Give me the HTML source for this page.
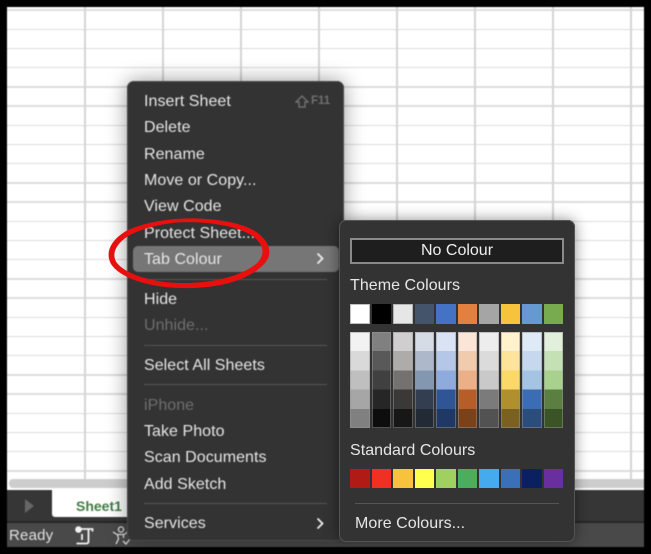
<!DOCTYPE html>
<html>
<head>
<meta charset="utf-8">
<style>
html,body{margin:0;padding:0;background:#000;}
#page{position:relative;width:651px;height:554px;overflow:hidden;background:#000;font-family:"Liberation Sans",sans-serif;}
#inner{position:absolute;left:7px;top:7px;width:637px;height:540px;overflow:hidden;background:#fff;filter:blur(.4px);}
.a{position:absolute;}
.h{position:absolute;left:0;width:637px;height:1.5px;background:#dcdcdc;}
.v{position:absolute;top:0;height:476px;width:1.5px;background:#d4d4d4;}
#menu{position:absolute;left:127px;top:81px;width:217px;height:460px;background:#333;border-radius:7px;box-shadow:0 0 20px rgba(0,0,0,.4),inset 0 0 0 1px #4a4a4a;filter:blur(.4px);}
#sub{position:absolute;left:339px;top:220px;width:236px;height:322px;background:#333;border-radius:7px;box-shadow:0 0 14px rgba(0,0,0,.45),inset 0 0 0 1px #555;filter:blur(.35px);}
.t{position:absolute;font-size:16px;line-height:20px;color:#e6e6e6;white-space:nowrap;letter-spacing:.05px;}
.d{color:#6e6e6e;}
.sep{position:absolute;height:1px;background:#555;}
.sw{position:absolute;width:19.5px;}
.o{box-shadow:inset 0 0 0 1px rgba(140,140,140,.55);}
.c{position:absolute;top:112px;width:19.5px;height:96px;}
.c::after{content:"";position:absolute;inset:0;box-shadow:inset 0 0 0 1px rgba(150,150,150,.5);}
</style>
</head>
<body>
<div id="page">
<div id="inner">
<div class="h" style="top:2px"></div><div class="h" style="top:21.5px"></div><div class="h" style="top:40.7px"></div><div class="h" style="top:59.9px"></div><div class="h" style="top:79.1px"></div><div class="h" style="top:98.3px"></div><div class="h" style="top:117.5px"></div><div class="h" style="top:136.7px"></div><div class="h" style="top:155.9px"></div><div class="h" style="top:175.1px"></div><div class="h" style="top:194.3px"></div><div class="h" style="top:213.5px"></div><div class="h" style="top:232.7px"></div><div class="h" style="top:251.9px"></div><div class="h" style="top:271.1px"></div><div class="h" style="top:290.3px"></div><div class="h" style="top:309.5px"></div><div class="h" style="top:328.7px"></div><div class="h" style="top:347.9px"></div><div class="h" style="top:367.1px"></div><div class="h" style="top:386.3px"></div><div class="h" style="top:405.5px"></div><div class="h" style="top:424.7px"></div><div class="h" style="top:443.9px"></div><div class="h" style="top:463.1px"></div>
<div class="v" style="left:77px"></div><div class="v" style="left:155px"></div><div class="v" style="left:233px"></div><div class="v" style="left:311px"></div><div class="v" style="left:389px"></div><div class="v" style="left:467px"></div><div class="v" style="left:545px"></div><div class="v" style="left:623px"></div>
<div class="a" style="left:2px;top:472px;width:635px;height:8.5px;background:#cdcdcd;border-radius:4px 0 0 4px;"></div>
<div class="a" style="left:0;top:483px;width:637px;height:32px;background:#363636;"></div>
<div class="a" style="left:45px;top:483px;width:90px;height:27px;background:#fff;border-radius:0 0 0 3px;"></div>
<div class="a" style="left:69px;top:490px;font-size:14px;line-height:18px;font-weight:bold;color:#3f7d42;">Sheet1</div>
<svg class="a" style="left:18px;top:492px" width="10" height="14"><path d="M0 0L9 7L0 14Z" fill="#666"/></svg>
<div class="a" style="left:0;top:514px;width:637px;height:2px;background:#262626;"></div>
<div class="a" style="left:0;top:516px;width:637px;height:24px;background:#494949;"></div>
<div class="a" style="left:2px;top:520px;font-size:15px;line-height:18px;color:#e0e0e0;letter-spacing:.2px;">Ready</div>
<svg class="a" style="left:68px;top:519px" width="20" height="20" fill="none" stroke="#f2f2f2" stroke-width="1.8"><circle cx="3.500" cy="3.500" r="2.400" fill="#f2f2f2"/><path d="M6 3H17.500V5.500M13.500 3V15.500Q13.500 17.500 11 17.500H1.500M7 8V14"/></svg>
<svg class="a" style="left:105px;top:519px" width="20" height="22" fill="none" stroke="#ddd" stroke-width="1.300"><circle cx="9" cy="3.500" r="2.600"/><path d="M1 6L5 8.500H12L16 6M5.500 8.500L6.500 13L4 18M11.500 8.500V12M11 15L14 18L18 13"/></svg>
</div>

<div id="menu">
<div class="a" style="left:5.5px;top:165px;width:206px;height:26px;background:#767676;border-radius:5px;"></div>
<div class="t" style="left:17px;top:11px">Insert Sheet</div>
<svg class="a" style="left:168px;top:14px" width="14" height="13" fill="none" stroke="#6f6f6f" stroke-width="1.500"><path d="M7 1L13 7H10V12H4V7H1Z"/></svg>
<div class="a" style="left:184px;top:13px;font-size:11.500px;line-height:15px;font-weight:bold;color:#6f6f6f;">F11</div>
<div class="t" style="left:17px;top:37px">Delete</div>
<div class="t" style="left:17px;top:64px">Rename</div>
<div class="t" style="left:17px;top:90px">Move or Copy...</div>
<div class="t" style="left:17px;top:116px">View Code</div>
<div class="t" style="left:17px;top:143px">Protect Sheet...</div>
<div class="t" style="left:17px;top:169px">Tab Colour</div>
<svg class="a" style="left:188px;top:171px" width="10" height="13" fill="none" stroke="#eee" stroke-width="1.800"><path d="M2.500 1.500L7.500 6.500L2.500 11.500"/></svg>
<div class="sep" style="left:17px;top:198px;width:183px"></div>
<div class="t" style="left:17px;top:209px">Hide</div>
<div class="t d" style="left:17px;top:235px">Unhide...</div>
<div class="sep" style="left:17px;top:264px;width:183px"></div>
<div class="t" style="left:17px;top:275px">Select All Sheets</div>
<div class="sep" style="left:17px;top:303px;width:183px"></div>
<div class="t d" style="left:17px;top:315px">iPhone</div>
<div class="t" style="left:17px;top:341px">Take Photo</div>
<div class="t" style="left:17px;top:367px">Scan Documents</div>
<div class="t" style="left:17px;top:394px">Add Sketch</div>
<div class="sep" style="left:17px;top:422px;width:183px"></div>
<div class="t" style="left:17px;top:433px">Services</div>
<svg class="a" style="left:188px;top:436px" width="10" height="13" fill="none" stroke="#eee" stroke-width="1.800"><path d="M2.500 1.500L7.500 6.500L2.500 11.500"/></svg>
</div>

<div id="sub">
<div class="a" style="left:11px;top:18px;width:210px;height:22px;background:#1e1e1e;border:2px solid #8a8a8a;color:#eee;font-size:16px;line-height:22px;text-align:center;">No Colour</div>
<div class="t" style="left:11px;top:56px">Theme Colours</div>

<div class="sw o" style="left:11px;top:84px;height:20px;background:#fff"></div>
<div class="sw" style="left:32.5px;top:84px;height:20px;background:#000"></div>
<div class="sw o" style="left:54px;top:84px;height:20px;background:#e7e6e6"></div>
<div class="sw" style="left:75.5px;top:84px;height:20px;background:#44546a"></div>
<div class="sw" style="left:97px;top:84px;height:20px;background:#4472c4"></div>
<div class="sw" style="left:118.5px;top:84px;height:20px;background:#e28041"></div>
<div class="sw" style="left:140px;top:84px;height:20px;background:#a5a5a5"></div>
<div class="sw" style="left:161.5px;top:84px;height:20px;background:#f7c33c"></div>
<div class="sw" style="left:183px;top:84px;height:20px;background:#6699d2"></div>
<div class="sw" style="left:204.5px;top:84px;height:20px;background:#78ab50"></div>

<div class="c" style="left:11px;background:linear-gradient(#f2f2f2 20%,#d9d9d9 20% 40%,#bfbfbf 40% 60%,#a6a6a6 60% 80%,#808080 80%)"></div>
<div class="c" style="left:32.5px;background:linear-gradient(#808080 20%,#595959 20% 40%,#404040 40% 60%,#262626 60% 80%,#0d0d0d 80%)"></div>
<div class="c" style="left:54px;background:linear-gradient(#d0cece 20%,#aeabab 20% 40%,#757171 40% 60%,#3b3838 60% 80%,#181717 80%)"></div>
<div class="c" style="left:75.5px;background:linear-gradient(#d6dce5 20%,#adb9ca 20% 40%,#8497b0 40% 60%,#333f50 60% 80%,#222a35 80%)"></div>
<div class="c" style="left:97px;background:linear-gradient(#dae3f3 20%,#b4c7e7 20% 40%,#8faadc 40% 60%,#2f5597 60% 80%,#203864 80%)"></div>
<div class="c" style="left:118.5px;background:linear-gradient(#fbe5d6 20%,#f0cbad 20% 40%,#ebb088 40% 60%,#b55e2a 60% 80%,#7b4118 80%)"></div>
<div class="c" style="left:140px;background:linear-gradient(#ededed 20%,#dbdbdb 20% 40%,#c9c9c9 40% 60%,#7b7b7b 60% 80%,#525252 80%)"></div>
<div class="c" style="left:161.5px;background:linear-gradient(#fff2cc 20%,#fde49a 20% 40%,#fad968 40% 60%,#b08f2e 60% 80%,#7a6120 80%)"></div>
<div class="c" style="left:183px;background:linear-gradient(#deebf7 20%,#c5d8ee 20% 40%,#a5c3e3 40% 60%,#3a6db3 60% 80%,#2a4d7c 80%)"></div>
<div class="c" style="left:204.5px;background:linear-gradient(#e2efda 20%,#c5e0b4 20% 40%,#a9d18e 40% 60%,#5a7f40 60% 80%,#3b5426 80%)"></div>

<div class="t" style="left:11px;top:221px">Standard Colours</div>

<div class="sw" style="left:11px;top:249px;height:19px;background:#b01c15"></div>
<div class="sw" style="left:32.5px;top:249px;height:19px;background:#f03020"></div>
<div class="sw" style="left:54px;top:249px;height:19px;background:#f7c33c"></div>
<div class="sw" style="left:75.5px;top:249px;height:19px;background:#ffff4d"></div>
<div class="sw" style="left:97px;top:249px;height:19px;background:#a0d060"></div>
<div class="sw" style="left:118.5px;top:249px;height:19px;background:#4cae5c"></div>
<div class="sw" style="left:140px;top:249px;height:19px;background:#45aaee"></div>
<div class="sw" style="left:161.5px;top:249px;height:19px;background:#3a70b8"></div>
<div class="sw" style="left:183px;top:249px;height:19px;background:#0a2060"></div>
<div class="sw" style="left:204.5px;top:249px;height:19px;background:#6a2f9e"></div>

<div class="sep" style="left:16px;top:283px;width:204px"></div>
<div class="t" style="left:16px;top:294px">More Colours...</div>
</div>

<svg class="a" style="left:0;top:0" width="651" height="554">
<path fill-rule="evenodd" fill="#e8100f" d="M175 219C208 216.500 245 222 259 234C272 245 273 257 261 267C243 283 212 289 180 288C148 287 120 278 111 264C104 251 113 238 128 230C141 224 158 220.500 175 219ZM176 222.500C205 220.500 240 226 254 237C265 246 265 256 256 264C238 278 208 283.500 180 283C152 282.500 124 274 116 261.500C111 252 118 241 132 234C144 228 160 224.500 176 222.500Z"/>
</svg>
</div>
</body>
</html>
